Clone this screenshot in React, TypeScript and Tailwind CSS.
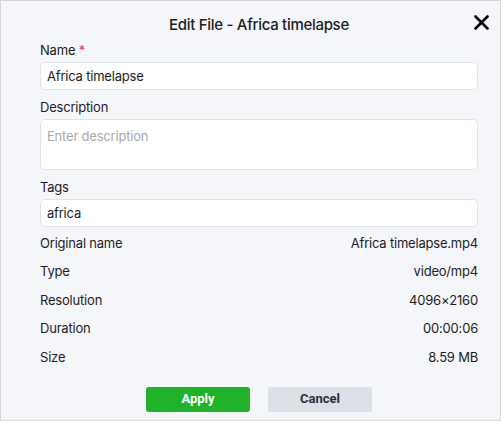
import React from "react";

const info = [
  { label: "Original name", value: "Africa timelapse.mp4" },
  { label: "Type", value: "video/mp4" },
  { label: "Resolution", value: "4096×2160" },
  { label: "Duration", value: "00:00:06" },
  { label: "Size", value: "8.59 MB" },
];

function Label({ children, required }: { children: React.ReactNode; required?: boolean }) {
  return (
    <div className="text-[13px] leading-4 tracking-[-0.2px] text-[#1d1d1f] mb-1">
      {children}
      {required && <span className="text-[#e5383b]"> *</span>}
    </div>
  );
}

export default function App() {
  return (
    <div
      className="relative w-[501px] h-[421px] bg-[#f5f6fa] border border-[#d4d4d4] text-[#1d1d1f]"
      style={{ fontFamily: "Inter, 'Noto Sans', sans-serif" }}
    >
      <button className="absolute left-[472px] top-[13px] w-4 h-4 flex items-center justify-center text-black">
        <svg width="15" height="15" viewBox="0 0 15 15">
          <path d="M1.5 1.5 L13.5 13.5 M13.5 1.5 L1.5 13.5" stroke="currentColor" strokeWidth="2.6" strokeLinecap="round" />
        </svg>
      </button>

      <div className="pl-[39px] pr-[22px] pt-[12px]">
        <h1 className="text-center text-[15px] leading-6 font-medium tracking-[-0.3px]">Edit File - Africa timelapse</h1>

        <div className="mt-[5px]">
          <Label required>Name</Label>
          <input
            defaultValue="Africa timelapse"
            className="w-full h-7 px-[6px] text-[13px] tracking-[-0.2px] bg-white border border-[#dfe2e8] rounded-[5px] outline-none"
          />
        </div>

        <div className="mt-[9px]">
          <Label>Description</Label>
          <textarea
            placeholder="Enter description"
            className="block w-full h-[51px] px-[6px] py-[8px] text-[13px] leading-4 tracking-[-0.2px] bg-white border border-[#dfe2e8] rounded-[5px] outline-none resize-none placeholder:text-[#a9a9ad]"
          />
        </div>

        <div className="mt-[9px]">
          <Label>Tags</Label>
          <input
            defaultValue="africa"
            className="w-full h-7 px-[6px] text-[13px] tracking-[-0.2px] bg-white border border-[#dfe2e8] rounded-[5px] outline-none"
          />
        </div>

        <div className="mt-[2px]">
          {info.map((row) => (
            <div key={row.label} className="flex justify-between items-center h-[28.5px] text-[13px] tracking-[-0.2px]">
              <span>{row.label}</span>
              <span>{row.value}</span>
            </div>
          ))}
        </div>

        <div className="flex justify-center gap-[18px] mt-[15px]" style={{ fontFamily: "Roboto, sans-serif" }}>
          <button className="w-[104px] h-[25px] rounded-[3px] bg-[#1fb32a] text-white text-[13px] font-bold">Apply</button>
          <button className="w-[104px] h-[25px] rounded-[3px] bg-[#dde1e7] text-[#2a2f3a] text-[13px] font-bold">Cancel</button>
        </div>
      </div>
    </div>
  );
}
